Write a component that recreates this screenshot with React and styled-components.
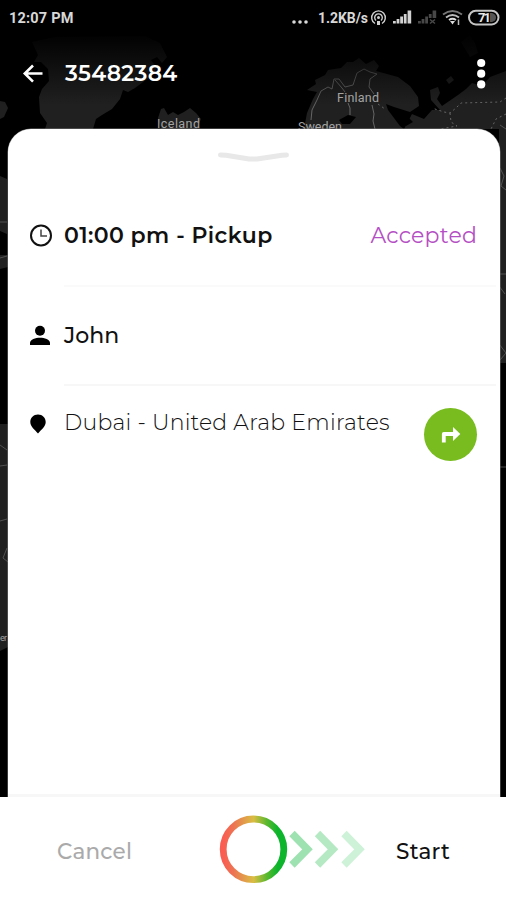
import React from 'react';
import styled, { createGlobalStyle } from 'styled-components';

const GlobalStyle = createGlobalStyle`
  * {
    box-sizing: border-box;
  }

  body {
    margin: 0;
    background: #000;
    font-family: Montserrat, Inter, 'Liberation Sans', sans-serif;
  }
`;

const Screen = styled.div`
  position: relative;
  display: flex;
  flex-direction: column;
  width: 506px;
  height: 900px;
  overflow: hidden;
  background: #000;
`;

const MapLayer = styled.svg`
  position: absolute;
  top: 0;
  left: 0;
`;

const StatusBar = styled.div`
  position: relative;
  display: flex;
  flex: none;
  align-items: center;
  justify-content: space-between;
  height: 36px;
  padding: 0 6px 0 9px;
  color: #d8d8d8;
  font: 700 14px Roboto, sans-serif;
`;

const Clock = styled.span`
  font-size: 14.5px;
  letter-spacing: 0.2px;
`;

const StatusIcons = styled.div`
  display: flex;
  align-items: center;
`;

const Speed = styled.span`
  width: 50px;
  margin-left: 9px;
  font-size: 14px;
  letter-spacing: -0.05px;
  white-space: nowrap;
`;

const AppBar = styled.header`
  position: relative;
  display: flex;
  flex: none;
  align-items: center;
  height: 93px;
  padding: 0 19px 17px 22px;
  color: #fff;
`;

const Title = styled.h1`
  flex: 1;
  margin: 0 0 0 21px;
  font-size: 22px;
  font-weight: 600;
  line-height: 28px;
  letter-spacing: ${(props) => props.$spacing}px;
`;

const Sheet = styled.main`
  position: relative;
  flex: 1;
  margin: 0 6px 0 8px;
  border-bottom: 3px solid #f7f7f7;
  border-radius: 23px 23px 0 0;
  background: #fff;
  box-shadow: 0 0 0 0.5px #777;
`;

const Handle = styled.div`
  display: flex;
  justify-content: center;
  height: 57px;
  padding-top: 21px;
`;

const Row = styled.section`
  display: flex;
  align-items: ${(props) => (props.$top ? 'flex-start' : 'center')};
  height: ${(props) => props.$height}px;
  padding-right: 23px;
`;

const IconCell = styled.div`
  display: flex;
  flex: none;
  width: 56px;
  padding-left: 21px;
  padding-top: ${(props) => props.$offset || 0}px;
`;

const Divider = styled.div`
  height: 2px;
  margin: 0 4px 0 56px;
  background: ${(props) => props.$color || '#f7f7f7'};
`;

const Label = styled.span`
  flex: 1;
  color: #111;
  font-size: 22px;
  font-weight: ${(props) => props.$weight};
  line-height: 28px;
  letter-spacing: ${(props) => props.$spacing}px;
  white-space: nowrap;
`;

const Status = styled.span`
  color: #b54fc4;
  font-size: 22px;
  letter-spacing: 0.2px;
`;

const Address = styled(Label)`
  padding-top: 23px;
`;

const DirectionsButton = styled.button`
  display: flex;
  align-items: center;
  justify-content: center;
  width: 53px;
  height: 53px;
  margin-top: 22px;
  padding: 2px 0 0;
  border: 0;
  border-radius: 50%;
  background: #78bc1f;
`;

const Footer = styled.footer`
  position: relative;
  display: flex;
  flex: none;
  align-items: center;
  height: 103px;
  padding: 0 51px 0 57px;
  background: #fff;
`;

const Action = styled.button`
  flex: none;
  width: ${(props) => props.$width}px;
  padding: 4px 0 0;
  border: 0;
  background: none;
  color: ${(props) => props.$color};
  font: inherit;
  font-size: 21.5px;
  font-weight: 500;
  letter-spacing: ${(props) => props.$spacing}px;
  text-align: left;
`;

const Slider = styled.svg`
  flex: none;
  width: 176px;
  height: 72px;
  margin-right: 4px;
`;

const Map = () => (
  <MapLayer width="506" height="900" viewBox="0 0 506 900">
    <defs>
      <linearGradient id="shade" x1="0" y1="0" x2="0" y2="1">
        <stop offset="0.3" stopColor="#000" />
        <stop offset="1" stopColor="#000" stopOpacity="0" />
      </linearGradient>
    </defs>
    <g fill="#202020">
      <path d="M32 42 L55 37 L145 36 L160 43 L167 57 L162 63 L157 57 L151 60 L157 68 L151 76 L143 82 L135 88 L128 92 L123 90 L120 99 L112 109 L102 115 L96 119 L93 129 L45 129 L47 123 L40 113 L39 97 L42 89 L49 81 L48 69 L41 62 L34 62 L38 55Z" />
      <path d="M0 101 L5 102 L8 108 L4 117 L0 119Z" />
      <path d="M158 118 L161 109 L164 108 L168 115 L173 112 L178 115 L184 112 L190 108 L196 113 L201 119 L197 129 L161 129Z" />
      <path d="M304 129 L307 113 L313 99 L317 92 L307 90 L316 84 L315 80 L325 75 L328 70 L341 68 L347 62 L353 62 L359 58 L366 64 L374 60 L379 66 L376 71 L398 77 L410 86 L418 97 L419 106 L410 112 L394 107 L386 104 L388 110 L400 126 L404 129 L412 114 L424 119 L432 110 L440 110 L431 100 L430 90 L438 87 L440 93 L437 99 L442 106 L458 95 L466 89 L472 83 L482 86 L490 77 L506 71 V363 H499 V129Z" />
      <path d="M461 42 L470 35 L475 43 L478 53 L470 57Z" fill="#161616" />
      <path d="M446 80 L451 76 L454 80 L449 84Z" />
      <path d="M0 176 L7 179 V234 L0 231Z M0 255 H8 V267 L0 269Z M0 424 H8 V647 L0 651Z" />
    </g>
    <path d="M339 120 L348 115 L356 117 L350 124 L342 124Z M395 113 L407 116 L413 122 L406 126 L401 120Z" fill="#000" />
    <g fill="none" stroke="#666" strokeWidth="1">
      <path d="M311 120 L312 110 L317 100 L321 91 L328 87 L332 89 L334 79 L339 79 L345 87 L353 85 L357 73 L364 69 L370 72 L377 74 L370 79 L369 87 L374 94 M372 105 L374 114 L373 121 L375 129" />
      <path d="M335 80 L342 88 L345 92 M348 103 L350 108 L350 115" />
      <path d="M506 98 L500 102 L461 103 L456 108 L450 113 L444 112 L432 108 M450 113 L451 122 L457 126 L440 129 M506 114 L496 119 L491 129 M378 104 L385 109" strokeDasharray="2 3" />
      <path d="M500 125 L506 129 M500 168 L504 176 L501 186 L506 190 M500 274 H506 M499 286 L505 294 M499 344 L506 353 L500 360 M499 467 H506 M0 222 H7 M0 258 L7 256 M0 445 L7 450 M0 466 L7 465 M0 521 L7 519 M7 548 L3 558 L8 562" strokeOpacity="0.7" />
    </g>
    <rect width="506" height="105" fill="url(#shade)" />
    <g fill="#a4a4a4" fontFamily="Roboto, sans-serif" fontSize="12.5">
      <text x="337" y="102" textLength="42">Finland</text>
      <text x="157" y="128" textLength="43">Iceland</text>
      <text x="298" y="131" textLength="44">Sweden</text>
      <text x="0" y="641" fontSize="9" textLength="7">er</text>
    </g>
  </MapLayer>
);

const StatusGlyphs = () => (
  <svg width="132" height="20" viewBox="368 8 132 20">
    <g fill="none" stroke="#cfcfcf" strokeWidth="1.4">
      <path d="M375 23.5 A6.8 6.8 0 1 1 382 23.5" />
      <path d="M376 20.5 A3.8 3.8 0 1 1 381 20.5" />
      <path d="M378.5 21 V25" strokeWidth="3" />
      <circle cx="378.5" cy="17.5" r="0.8" />
    </g>
    <path d="M393 21h2.8v2.5h-2.8z M396.6 19h2.8v4.5h-2.8z M400.2 16.5h2.8v7h-2.8z M403.8 14h2.8v9.5h-2.8z M407.6 10.5h3.6v13h-3.6z" fill="#d2d2d2" />
    <path d="M418 21h2.8v2.5h-2.8z M421.6 19h2.8v4.5h-2.8z M425.2 16.5h2.8v7h-2.8z M428.8 14h2.8v4h-2.8z M432.6 10.5h3.6v7.5h-3.6z" fill="#484848" />
    <path d="M430 19.5l5 4 M430 23.5l5-4" stroke="#484848" strokeWidth="1.5" />
    <g fill="none" strokeWidth="1.8">
      <path d="M443 14.5 Q452.5 7.5 462 14.5" stroke="#777" />
      <path d="M446 17.5 Q452.5 12.5 459 17.5" stroke="#bbb" />
      <path d="M449 20 Q452.5 17.5 456 20" stroke="#ddd" />
      <path d="M458.5 19.5 V25" stroke="#bbb" strokeWidth="1.5" />
    </g>
    <path d="M450 21 H455 L452.5 24.5Z" fill="#ddd" />
    <rect x="469" y="10.8" width="29.5" height="13.6" rx="6.8" fill="none" stroke="#c5c5c5" strokeWidth="2" />
    <path d="M490 13 H492 Q496 14 496 17.5 Q496 21 492 22 H490Z" fill="#555" />
    <text x="478" y="22.3" fill="#e8e8e8" fontFamily="Roboto, sans-serif" fontSize="13" fontWeight="700" textLength="13">71</text>
  </svg>
);

const SlideControl = () => (
  <Slider viewBox="216 813 176 72">
    <defs>
      <linearGradient id="ring">
        <stop offset="0" stopColor="#fa5c51" />
        <stop offset="0.17" stopColor="#ed7453" />
        <stop offset="0.5" stopColor="#d9bd43" />
        <stop offset="0.72" stopColor="#5bb82e" />
        <stop offset="0.9" stopColor="#0cb52c" />
      </linearGradient>
    </defs>
    <circle cx="253.5" cy="849.3" r="30.3" fill="#fff" stroke="url(#ring)" strokeWidth="6.8" />
    <g fill="none" strokeWidth="7.5">
      <path d="M292 833.5 L307.5 849.3 L292 865" stroke="#9ee2b2" />
      <path d="M317.5 833.5 L333 849.3 L317.5 865" stroke="#b5e9c3" />
      <path d="M344 833.5 L359.5 849.3 L344 865" stroke="#cef2d8" />
    </g>
  </Slider>
);

export default () => (
  <>
    <GlobalStyle />
    <Screen>
      <Map />
      <StatusBar>
        <Clock>12:07 PM</Clock>
        <StatusIcons>
          <svg width="18" height="20" viewBox="0 0 18 20" fill="#d8d8d8">
            <circle cx="3" cy="14" r="1.8" />
            <circle cx="9" cy="14" r="1.8" />
            <circle cx="15" cy="14" r="1.8" />
          </svg>
          <Speed>1.2KB/s</Speed>
          <StatusGlyphs />
        </StatusIcons>
      </StatusBar>
      <AppBar>
        <svg width="22" height="22" viewBox="0 0 22 22" fill="none" stroke="#fff" strokeWidth="2.6">
          <path d="M11 2.5 L2.8 10.5 L11 18.7 M3 10.5 H20.5" />
        </svg>
        <Title $spacing={0.35}>35482384</Title>
        <svg width="12" height="32" viewBox="0 0 12 32" fill="#fff">
          <circle cx="6.2" cy="5" r="4.1" />
          <circle cx="6.2" cy="15.7" r="4.1" />
          <circle cx="6.2" cy="26.4" r="4.1" />
        </svg>
      </AppBar>
      <Sheet>
        <Handle>
          <svg width="74" height="16" viewBox="0 0 74 16">
            <path d="M3.5 5 L9 5.2 L32 9 H40 L65 5.2 L69.5 5" fill="none" stroke="#e8e8e8" strokeWidth="5" strokeLinecap="round" strokeLinejoin="round" />
          </svg>
        </Handle>
        <Row $height={99}>
          <IconCell>
            <svg width="24" height="24" viewBox="0 0 24 24" fill="none" stroke="#111">
              <circle cx="12" cy="11.5" r="10" strokeWidth="2" />
              <path d="M12 5.5 V12 H18" stroke="#444" strokeWidth="1.5" />
            </svg>
          </IconCell>
          <Label $weight={600} $spacing={0.4}>01:00 pm - Pickup</Label>
          <Status>Accepted</Status>
        </Row>
        <Divider $color="#fafafa" />
        <Row $height={97}>
          <IconCell>
            <svg width="22" height="22" viewBox="0 0 22 22">
              <circle cx="11" cy="5.7" r="5" />
              <path d="M1 20 V18 C1 14.5 6.5 12.7 11 12.7 S21 14.5 21 18 V20Z" />
            </svg>
          </IconCell>
          <Label $weight={500} $spacing={0}>John</Label>
        </Row>
        <Divider />
        <Row $height={85} $top>
          <IconCell $offset={28}>
            <svg width="18" height="20" viewBox="0 0 18 20">
              <path d="M9 .5 C4.5 .5 1.3 3.8 1.3 8 C1.3 12.5 6 16 9 19.5 C12 16 16.7 12.5 16.7 8 C16.7 3.8 13.5 .5 9 .5Z" />
            </svg>
          </IconCell>
          <Address $weight={300} $spacing={0.25}>Dubai - United Arab Emirates</Address>
          <DirectionsButton>
            <svg width="22" height="20" viewBox="0 0 22 20">
              <path d="M3.8 16.5 V8 H14" fill="none" stroke="#fff" strokeWidth="3.8" strokeLinejoin="round" />
              <path d="M13 1 L20.3 8 L13 15Z" fill="#fff" />
            </svg>
          </DirectionsButton>
        </Row>
      </Sheet>
      <Footer>
        <Action $color="#aaa" $width={159} $spacing={0.2}>Cancel</Action>
        <SlideControl />
        <Action $color="#111" $width={59} $spacing={0.3}>Start</Action>
      </Footer>
    </Screen>
  </>
);
